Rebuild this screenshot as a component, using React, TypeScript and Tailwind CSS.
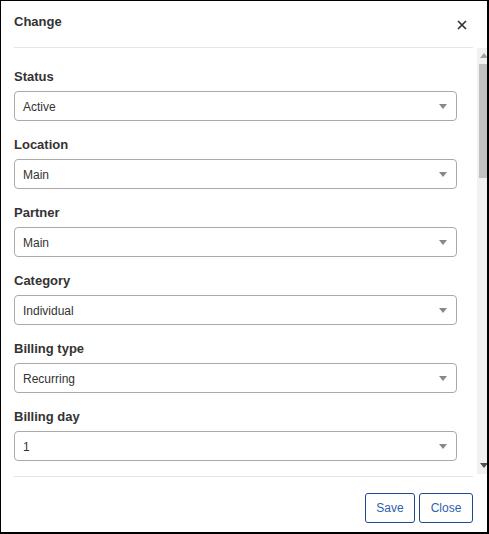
import React from "react";

const fields = [
  { label: "Status", value: "Active" },
  { label: "Location", value: "Main" },
  { label: "Partner", value: "Main" },
  { label: "Category", value: "Individual" },
  { label: "Billing type", value: "Recurring" },
  { label: "Billing day", value: "1" },
];

function SelectBox({ value }: { value: string }) {
  return (
    <div className="flex h-[30px] w-[443px] items-center justify-between rounded-[4px] border border-[#aaaaaa] bg-white pl-[8px] pr-[9px]">
      <span className="pt-[2px] text-[12px] text-[#333333]">{value}</span>
      <svg width="8" height="5" viewBox="0 0 8 5">
        <path d="M0 0 L8 0 L4 5 Z" fill="#888888" />
      </svg>
    </div>
  );
}

export default function App() {
  return (
    <div
      className="flex h-[534px] w-[489px] flex-col overflow-hidden border-t border-l border-r-2 border-b-2 border-black bg-white"
      style={{ fontFamily: '"Liberation Sans", Arial, sans-serif' }}
    >
      <div className="ml-[13px] mr-[14px] flex h-[47px] shrink-0 items-start justify-between border-b border-[#e5e5e5] pt-[11px]">
        <span className="text-[13px] font-bold leading-[20px] text-[#333333]">Change</span>
        <button className="mr-[6px] mt-[8px] flex h-[10px] w-[10px] items-center justify-center">
          <svg width="10" height="10" viewBox="0 0 10 10">
            <path d="M1 1 L9 9 M9 1 L1 9" stroke="#333333" strokeWidth="1.7" />
          </svg>
        </button>
      </div>

      <div className="flex h-[426px] shrink-0">
        <div className="flex-1 overflow-hidden pl-[13px] pt-[19px]">
          {fields.map((f) => (
            <div key={f.label} className="mb-[14px]">
              <div className="mb-[4px] text-[13px] font-bold leading-[20px] text-[#333333]">{f.label}</div>
              <SelectBox value={f.value} />
            </div>
          ))}
        </div>
        <div className="relative w-[10px] bg-[#f1f1f1]">
          <svg className="absolute left-[3px] top-[5px]" width="8" height="5" viewBox="0 0 8 5">
            <path d="M0 5 L8 5 L4 0 Z" fill="#a3a3a3" />
          </svg>
          <div className="absolute left-[2px] right-0 top-[16px] h-[114px] bg-[#c1c1c1]" />
          <svg className="absolute bottom-[6px] left-[3px]" width="8" height="5" viewBox="0 0 8 5">
            <path d="M0 0 L8 0 L4 5 Z" fill="#505050" />
          </svg>
        </div>
      </div>

      <div className="ml-[13px] mr-[14px] mt-[2px] flex justify-end gap-[4px] border-t border-[#e5e5e5] pt-[16px]">
        <button className="h-[30px] w-[50px] rounded-[3px] border border-[#1e4a8c] bg-white text-[12px] text-[#2f5fae]">
          Save
        </button>
        <button className="h-[30px] w-[54px] rounded-[3px] border border-[#1e4a8c] bg-white text-[12px] text-[#2f5fae]">
          Close
        </button>
      </div>
    </div>
  );
}
